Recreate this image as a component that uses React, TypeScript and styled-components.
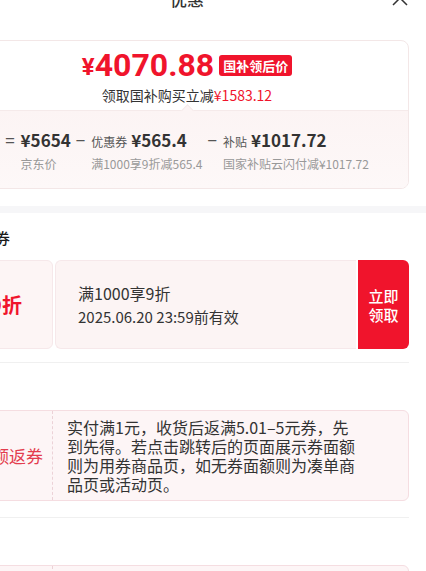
import React from "react";
import styled, { createGlobalStyle } from "styled-components";

const RED = "#f0142c";
const TEXT = "#333";
const MUTED = "#999";

const GlobalStyle = createGlobalStyle`
  html, body {
    margin: 0;
    padding: 0;
    background: #fff;
    overflow: hidden;
  }
  body {
    font-family: "Noto Sans CJK SC", "Noto Sans", sans-serif;
    color: ${TEXT};
  }
`;

const Sheet = styled.div`
  width: 478px;
  margin: -22px 0 0 -52px;
`;

const Header = styled.header`
  display: grid;
  grid-template-columns: 1fr auto 1fr;
  align-items: center;
  height: 40px;
  padding: 0 18px;
`;

const Title = styled.div`
  grid-column: 2;
  font-size: 17px;
  font-weight: 500;
  color: ${TEXT};
`;

const Close = styled.button`
  justify-self: end;
  width: 16px;
  height: 16px;
  padding: 0;
  border: 0;
  background: none;
  display: flex;
`;

const Content = styled.div`
  padding: 22px 17px 0;
`;

const PriceCard = styled.section`
  border: 1px solid #f3e7e7;
  border-radius: 8px;
  overflow: hidden;
`;

const PriceTop = styled.div`
  padding: 4px 0 5px;
  text-align: center;
`;

const PriceLine = styled.div`
  display: flex;
  justify-content: center;
  align-items: center;
  height: 40px;
  color: ${RED};
  font-family: Roboto, "Noto Sans CJK SC", sans-serif;
  font-weight: 700;
`;

const Yen = styled.span`
  font-size: 24px;
  margin-top: 3px;
`;

const Amount = styled.span`
  font-size: 32px;
  line-height: 40px;
`;

const Badge = styled.span`
  margin-left: 5px;
  padding: 0 4px;
  height: 21px;
  line-height: 21px;
  border-radius: 3px;
  background: ${RED};
  color: #fff;
  font-family: "Noto Sans CJK SC", sans-serif;
  font-size: 13px;
  font-weight: 700;
`;

const SubLine = styled.div`
  font-size: 14px;
  line-height: 20px;
  color: ${TEXT};
  em {
    font-style: normal;
    color: ${RED};
  }
`;

const Breakdown = styled.div`
  position: relative;
  display: flex;
  justify-content: center;
  gap: 5px;
  padding: 18px 0 15px;
  border-top: 1px solid #f5eaea;
  background: linear-gradient(180deg, #fcf4f4 0%, #fdf8f8 100%);
  &::before {
    content: "";
    position: absolute;
    top: -5px;
    left: 50%;
    width: 8px;
    height: 8px;
    margin-left: -4px;
    background: #fcf4f4;
    border-left: 1px solid #f5eaea;
    border-top: 1px solid #f5eaea;
    transform: rotate(45deg);
  }
`;

const Term = styled.div`
  display: flex;
  gap: 6px;
`;

const Sign = styled.span`
  font-size: 17px;
  line-height: 22px;
  color: #555;
`;

const TermStack = styled.div`
  display: flex;
  flex-direction: column;
`;

const TermTop = styled.div`
  display: flex;
  align-items: baseline;
  gap: 4px;
  white-space: nowrap;
`;

const TermLabel = styled.span`
  font-size: 12px;
  color: #555;
`;

const TermValue = styled.span`
  font-size: 17px;
  line-height: 22px;
  font-weight: 700;
  color: ${TEXT};
`;

const TermDesc = styled.div`
  margin-top: 4px;
  font-size: 12px;
  line-height: 18px;
  color: ${MUTED};
  white-space: nowrap;
`;

const Band = styled.div`
  height: 7px;
  margin-top: 17px;
  background: #f6f6f8;
`;

const Section = styled.section`
  padding: 14px 17px 0;
`;

const SectionTitle = styled.h3`
  margin: 0 0 11px;
  font-size: 15px;
  line-height: 22px;
  font-weight: 500;
  color: #1a1a1a;
`;

const Item = styled.div<{ $gap: number }>`
  padding-bottom: ${(p) => p.$gap}px;
  border-bottom: 1px solid #f0f0f0;
`;

const CouponRow = styled.div`
  display: flex;
  gap: 2px;
  height: 89px;
`;

const Stub = styled.div`
  flex: 0 0 88px;
  display: flex;
  align-items: center;
  justify-content: center;
  padding-right: 6px;
  background: #fdf5f5;
  border: 1px solid #f6e8ea;
  border-radius: 6px;
  box-sizing: border-box;
  color: ${RED};
  font-size: 20px;
  font-weight: 700;
`;

const CouponBody = styled.div`
  flex: 1;
  display: flex;
  flex-direction: column;
  justify-content: center;
  gap: 4px;
  padding-left: 22px;
  background: #fcf4f4;
  border: 1px solid #f6e8ea;
  border-right: 0;
  border-radius: 6px 0 0 6px;
`;

const CouponName = styled.div`
  font-size: 16px;
  line-height: 20px;
  color: ${TEXT};
`;

const CouponDate = styled.div`
  font-size: 15px;
  line-height: 20px;
  color: ${TEXT};
`;

const ClaimButton = styled.button`
  flex: 0 0 51px;
  border: 0;
  border-radius: 0 6px 6px 0;
  background: ${RED};
  color: #fff;
  font-family: inherit;
  font-size: 15px;
  font-weight: 500;
  line-height: 19px;
  padding: 0;
`;

const RebateCard = styled.div`
  display: flex;
  min-height: 91px;
  background: #fdf5f6;
  border: 1px solid #f5dde1;
  border-radius: 6px;
  box-sizing: border-box;
`;

const RebateStub = styled.div`
  flex: 0 0 86px;
  display: flex;
  align-items: center;
  justify-content: center;
  border-right: 1px dashed #ecd2d7;
  color: #e33c4e;
  font-size: 17px;
  white-space: nowrap;
`;

const RebateText = styled.div`
  width: 292px;
  padding: 7px 0 6px 14px;
  font-size: 16px;
  line-height: 19px;
  color: ${TEXT};
`;

const terms = [
  { sign: "=", value: "¥5654", desc: "京东价" },
  { sign: "−", label: "优惠券", value: "¥565.4", desc: "满1000享9折减565.4" },
  { sign: "−", label: "补贴", value: "¥1017.72", desc: "国家补贴云闪付减¥1017.72" },
];

const rebateText =
  "实付满1元，收货后返满5.01–5元券，先到先得。若点击跳转后的页面展示券面额则为用券商品页，如无券面额则为凑单商品页或活动页。";

export default function App() {
  return (
    <>
      <GlobalStyle />
      <Sheet>
        <Header>
          <Title>优惠</Title>
          <Close aria-label="关闭">
            <svg width="16" height="16" viewBox="0 0 16 16">
              <path d="M1 1L15 15M15 1L1 15" stroke="#333" strokeWidth="1.5" />
            </svg>
          </Close>
        </Header>

        <Content>
          <PriceCard>
            <PriceTop>
              <PriceLine>
                <Yen>¥</Yen>
                <Amount>4070.88</Amount>
                <Badge>国补领后价</Badge>
              </PriceLine>
              <SubLine>
                领取国补购买立减<em>¥1583.12</em>
              </SubLine>
            </PriceTop>
            <Breakdown>
              {terms.map((t) => (
                <Term key={t.desc}>
                  <Sign>{t.sign}</Sign>
                  <TermStack>
                    <TermTop>
                      {t.label && <TermLabel>{t.label}</TermLabel>}
                      <TermValue>{t.value}</TermValue>
                    </TermTop>
                    <TermDesc>{t.desc}</TermDesc>
                  </TermStack>
                </Term>
              ))}
            </Breakdown>
          </PriceCard>
        </Content>

        <Band />

        <Section>
          <SectionTitle>优惠券</SectionTitle>
          <Item $gap={13}>
            <CouponRow>
              <Stub>9折</Stub>
              <CouponBody>
                <CouponName>满1000享9折</CouponName>
                <CouponDate>2025.06.20 23:59前有效</CouponDate>
              </CouponBody>
              <ClaimButton>
                立即
                <br />
                领取
              </ClaimButton>
            </CouponRow>
          </Item>
        </Section>

        <Section>
          <SectionTitle>返券</SectionTitle>
          <Item $gap={16}>
            <RebateCard>
              <RebateStub>满额返券</RebateStub>
              <RebateText>{rebateText}</RebateText>
            </RebateCard>
          </Item>
        </Section>

        <Section>
          <SectionTitle>返券</SectionTitle>
          <Item $gap={16}>
            <RebateCard>
              <RebateStub>满额返券</RebateStub>
              <RebateText>{rebateText}</RebateText>
            </RebateCard>
          </Item>
        </Section>
      </Sheet>
    </>
  );
}
